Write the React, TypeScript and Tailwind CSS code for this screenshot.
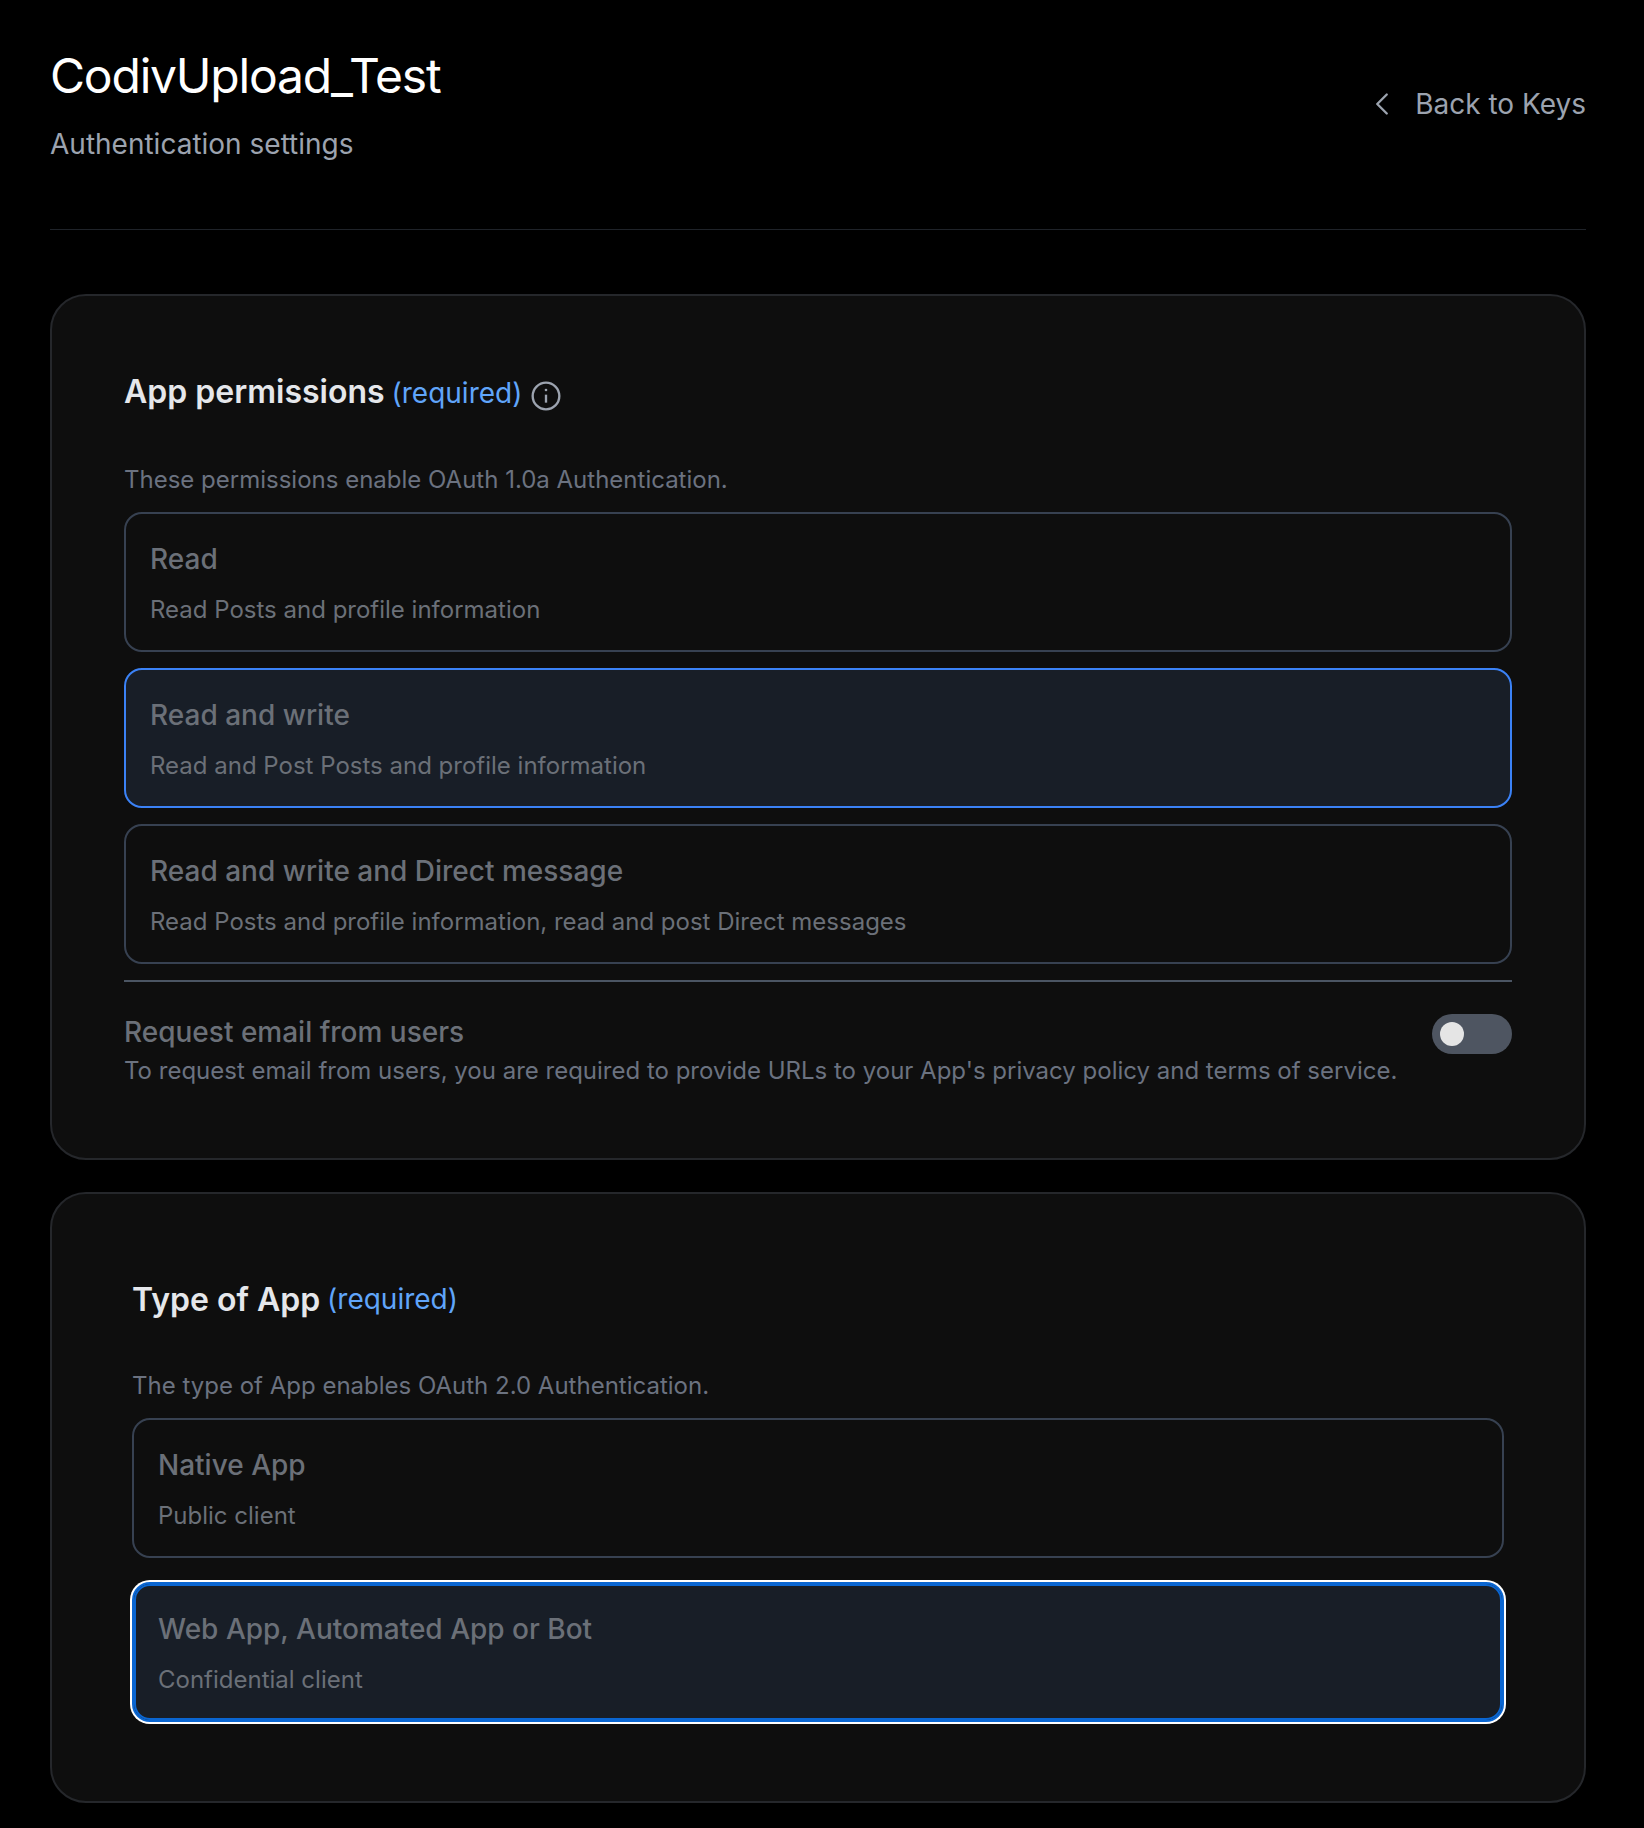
import React from 'react';
import { ChevronLeft } from 'lucide-react';

interface OptionProps {
  title: string;
  description: string;
  selected?: boolean;
  focused?: boolean;
}

const Option: React.FC<OptionProps> = ({ title, description, selected = false, focused = false }) => {
  let tone = 'border-[#374151]';
  if (selected) tone = 'border-[#3b82f6] bg-[#181e27]';
  if (focused) tone = 'border-[#0a66d2] bg-[#181e27] shadow-[0_0_0_2px_#ffffff,inset_0_0_0_2px_#0a66d2]';

  return (
    <div className={`h-[140px] rounded-[18px] border-2 px-6 pt-[25px] ${tone}`}>
      <h4 className="text-[28px] leading-[40px] font-medium text-[#6b7078]">{title}</h4>
      <p className="mt-[13px] text-[24px] leading-[36px] text-[#6b7078]">{description}</p>
    </div>
  );
};

export default function App() {
  return (
    <div className="min-h-[1828px] bg-black pl-[50px] pr-[58px] font-['Inter',sans-serif]">
      <header className="flex h-[230px] items-start justify-between border-b border-[#1f2329] pt-[46px]">
        <div>
          <h1 className="text-[48px] leading-[60px] font-normal tracking-tight text-white">CodivUpload_Test</h1>
          <p className="mt-[18px] text-[28px] leading-[40px] text-[#9ca3af]">Authentication settings</p>
        </div>
        <a className="mt-[38px] flex items-center text-[28px] leading-[40px] text-[#9ca3af]">
          <ChevronLeft size={38} strokeWidth={1.5} className="mr-[14px]" />
          Back to Keys
        </a>
      </header>

      <section className="mt-[64px] h-[866px] rounded-[36px] border-2 border-[#25272b] bg-[#0e0e0e] px-[72px] pt-[73px]">
        <div className="flex items-center">
          <h3 className="text-[32px] leading-[45px] font-semibold text-[#e5e7eb]">App permissions</h3>
          <span className="ml-[7px] mt-[3px] text-[28px] leading-[42px] text-[#60a5fa]">(required)</span>
          <svg className="ml-[8px] mt-[8px] text-[#9ca3af]" width="32" height="32" viewBox="0 0 24 24" fill="none" stroke="currentColor" strokeWidth="1.75">
            <circle cx="12" cy="12" r="10" />
            <path d="M12 11v6" />
            <circle cx="12" cy="7.5" r="1" fill="currentColor" stroke="none" />
          </svg>
        </div>
        <p className="mt-[48px] text-[24px] leading-[36px] text-[#6b7280]">These permissions enable OAuth 1.0a Authentication.</p>
        <div className="mt-[14px] flex flex-col gap-[16px]">
          <Option title="Read" description="Read Posts and profile information" />
          <Option title="Read and write" description="Read and Post Posts and profile information" selected />
          <Option title="Read and write and Direct message" description="Read Posts and profile information, read and post Direct messages" />
        </div>
        <div className="mt-[16px] flex items-start justify-between border-t-2 border-[#4b5563] pt-[32px]">
          <div>
            <h4 className="text-[28px] leading-[36px] font-medium text-[#6b7078]">Request email from users</h4>
            <p className="mt-[3px] text-[24px] leading-[36px] text-[#6b7280]">To request email from users, you are required to provide URLs to your App's privacy policy and terms of service.</p>
          </div>
          <div className="flex h-[40px] w-[80px] items-center rounded-full bg-[#4e5561] px-[8px]">
            <span className="h-[24px] w-[24px] rounded-full bg-[#e5e5e5]" />
          </div>
        </div>
      </section>

      <section className="mt-[32px] h-[611px] rounded-[36px] border-2 border-[#25272b] bg-[#0e0e0e] px-[80px] pt-[83px]">
        <div className="flex items-center">
          <h3 className="text-[32px] leading-[45px] font-semibold text-[#e5e7eb]">Type of App</h3>
          <span className="ml-[7px] text-[28px] leading-[45px] text-[#60a5fa]">(required)</span>
        </div>
        <p className="mt-[46px] text-[24px] leading-[36px] text-[#6b7280]">The type of App enables OAuth 2.0 Authentication.</p>
        <div className="mt-[14px] flex flex-col gap-[24px]">
          <Option title="Native App" description="Public client" />
          <Option title="Web App, Automated App or Bot" description="Confidential client" focused />
        </div>
      </section>
    </div>
  );
}
